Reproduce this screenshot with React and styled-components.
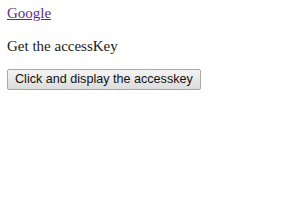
import React from 'react';
import styled, { createGlobalStyle } from 'styled-components';

const GlobalStyle = createGlobalStyle`
  body {
    margin: 5px 7px;
    background: #ffffff;
    font-family: "Liberation Serif", "Times New Roman", serif;
    font-size: 15px;
    line-height: 17px;
    color: #1a1a1a;
  }
`;

const Link = styled.a`
  color: #5b2e8c;
  text-decoration: underline;
`;

const Text = styled.p`
  margin: 16px 0 14px;
`;

const Button = styled.button`
  display: block;
  font-family: "Liberation Sans", Arial, sans-serif;
  font-size: 12.6px;
  line-height: 15px;
  color: #111;
  padding: 2px 7px;
  border: 1px solid #a8a8a8;
  border-radius: 2px;
  background: linear-gradient(#f4f4f4, #dcdcdc);
  cursor: pointer;
`;

export default function App() {
  return (
    <>
      <GlobalStyle />
      <Link href="#" accessKey="g">Google</Link>
      <Text>Get the accessKey</Text>
      <Button>Click and display the accesskey</Button>
    </>
  );
}
